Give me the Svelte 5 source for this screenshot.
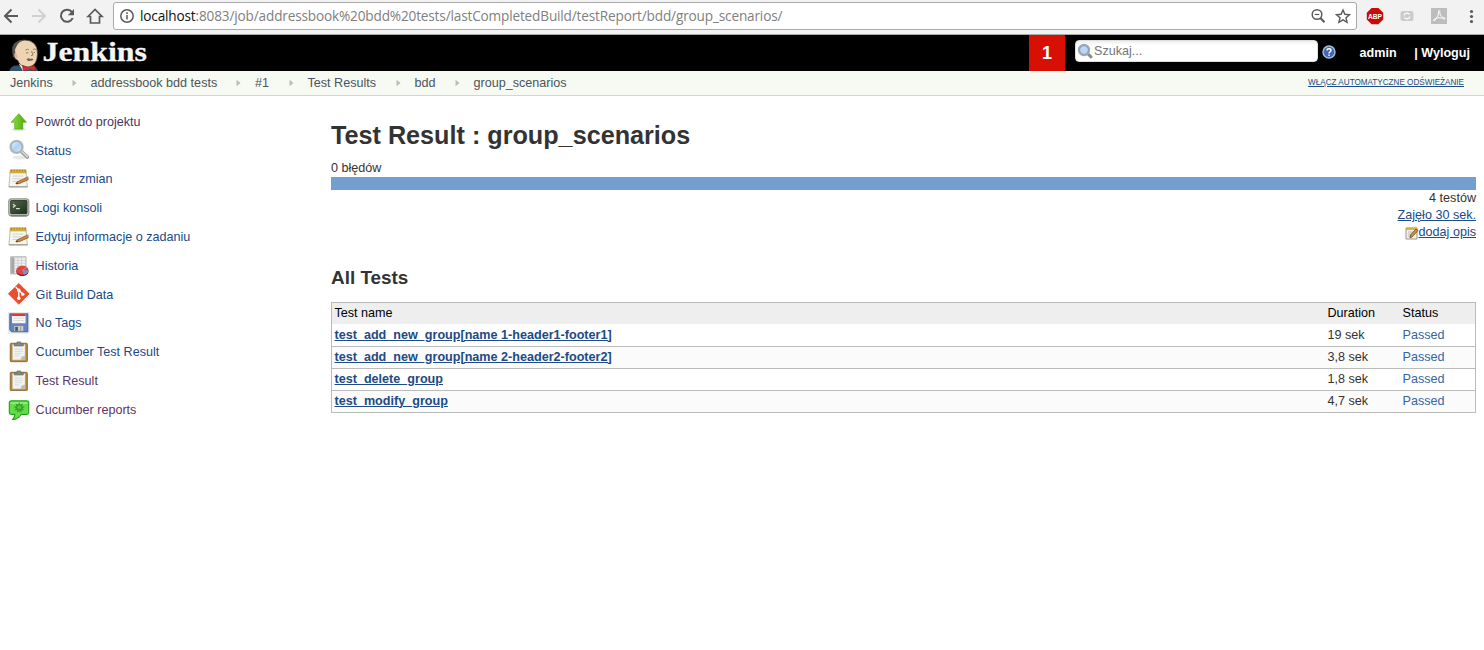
<script>
  const crumbs = [
    ['Jenkins', 42.5], ['addressbook bdd tests', 126.5], ['#1', 14.5],
    ['Test Results', 69], ['bdd', 21], ['group_scenarios', 93]
  ];
  const tasks = [
    ['up', 'Powrót do projektu', true],
    ['search', 'Status'],
    ['notepad', 'Rejestr zmian'],
    ['terminal', 'Logi konsoli'],
    ['notepad', 'Edytuj informacje o zadaniu'],
    ['chart', 'Historia'],
    ['git', 'Git Build Data'],
    ['save', 'No Tags'],
    ['clip', 'Cucumber Test Result'],
    ['clip', 'Test Result', true],
    ['cucumber', 'Cucumber reports', true]
  ];
  const tests = [
    ['test_add_new_group[name 1-header1-footer1]', '19 sek'],
    ['test_add_new_group[name 2-header2-footer2]', '3,8 sek'],
    ['test_delete_group', '1,8 sek'],
    ['test_modify_group', '4,7 sek']
  ];
</script>

{#snippet icon(name)}
  <svg class="icon" viewBox="0 0 24 24">
    {#if name === 'up'}
      <ellipse cx="12" cy="20.5" rx="8" ry="1.5" fill="#ddd" />
      <path d="M12 3 3.500 12.500H7.500V20h9v-7.500h4z" fill="url(#green)" stroke="#58a716" stroke-width=".8" />
    {:else if name === 'search'}
      <ellipse cx="14" cy="20.500" rx="9" ry="2.200" fill="#e8e8e6" />
      <path d="m15 14 6.500 6" stroke="#999b98" stroke-width="4" stroke-linecap="round" />
      <path d="m15.500 14 6 5.500" stroke="#d4d6d2" stroke-width="2" stroke-linecap="round" />
      <circle cx="9.500" cy="8.800" r="7" fill="url(#glass)" stroke="#b9bdbb" stroke-width="2" />
      <circle cx="9.500" cy="8.800" r="6" fill="none" stroke="#789fc9" stroke-width=".7" />
    {:else if name === 'notepad'}
      <path d="M2.500 3.500h17.500L21.500 21H1z" fill="#f6f6f2" stroke="#b7b7ae" />
      <path d="M1 20.800h20.700" stroke="#aaa99f" stroke-width="1.600" />
      <path d="M2.500 2h17.500v3.500h-17.500z" fill="#dcb63b" stroke="#a98b2b" stroke-width=".6" />
      <path d="M4 2v2m3-2v2m3-2v2m3-2v2m3-2v2m3-2v2" stroke="#8c7427" stroke-width=".8" />
      <path d="M5 9h12M5 12h10M5 15h7" stroke="#cfcfc9" />
      <path d="m10 15.500 10.500-5 2 2.500-9.500 4.200-4 .5z" fill="#d18a35" stroke="#76502b" stroke-width=".8" />
      <path d="m20 10.300 2-1 1.500 2.300-2 1z" fill="#d87963" />
      <path d="m8 17.700 2.500-1.500.7 1.300z" fill="#333" />
    {:else if name === 'terminal'}
      <rect x=".8" y="2" width="22.400" height="19" rx="2.500" fill="#c4c5bf" stroke="#80837d" />
      <rect x="3" y="4" width="18" height="14.500" rx=".6" fill="url(#screen)" stroke="#263224" />
      <path d="m5.500 8 2.500 1.800-2.500 1.800M9 13h4" fill="none" stroke="#d9e4d3" stroke-width="1.300" />
      <path d="M3 21h18" stroke="#686b65" stroke-width="1.200" />
    {:else if name === 'chart'}
      <path d="M3 2h17v19H3z" fill="#f4f4f3" stroke="#a7a7a5" />
      <path d="M3.500 2.500h3.700v18h-3.700z" fill="#a5a7a5" />
      <path d="M3.500 3h16M7 6h13M7 9h13M7 12h13M7 15h7M7 18h5M11 3v18M15 3v11" stroke="#c5c5c3" stroke-width=".8" />
      <ellipse cx="16" cy="18.500" rx="6.800" ry="5" fill="#921818" />
      <ellipse cx="16" cy="17" rx="6.800" ry="5" fill="#dc4545" />
      <path d="m16 17 1.500 4.900q4.500-.5 5.300-4.900z" fill="#6e9acb" />
      <path d="m16 17 5-3.300" stroke="#ef8585" />
    {:else if name === 'git'}
      <path d="M12 .6 23.500 12 12 23.500.5 12z" fill="#e94e31" stroke="#e94e31" stroke-width="1" stroke-linejoin="round" />
      <path d="m8.500 4.500 8 8M12 8v9" stroke="#fff" stroke-width="1.500" />
      <g fill="#fff"><circle cx="12" cy="8" r="1.900" /><circle cx="16.400" cy="12.400" r="1.900" /><circle cx="12" cy="17" r="1.900" /></g>
    {:else if name === 'save'}
      <path d="M0 0h24v24H0z" fill="#e9e9eb" />
      <path d="M2 2h20v20H4l-2-2z" fill="#6485bd" stroke="#3e5c91" />
      <path d="M4.500 2h15v10.500h-15z" fill="#f7f7f7" />
      <path d="M4.500 2h15v2.500h-15z" fill="#d63b35" />
      <path d="M6 7h12M6 9.500h12" stroke="#d0d0d0" stroke-width=".8" />
      <path d="M6.500 15h11v6.500h-11z" fill="#c9ccce" stroke="#687584" stroke-width=".7" />
      <path d="M8 16.500h3v4.500H8z" fill="#435679" />
      <path d="M14 15v6.500" stroke="#969b9e" />
    {:else if name === 'clip'}
      <rect x="2.500" y="2.500" width="19" height="20.500" rx="1" fill="#b4863d" stroke="#8b652c" />
      <path d="M5 4h14v17H5z" fill="#f2f2ef" stroke="#c9c7bd" stroke-width=".6" />
      <path d="M7.500 9h9M7.500 11.500h9M7.500 14h8M7.500 16.500h5" stroke="#d3d3d0" stroke-width=".8" />
      <path d="M19 16v5h-5l1-3.500z" fill="#bdbeb9" />
      <path d="M7 5.500V3h3V1h4v2h3v2.500z" fill="#858a83" stroke="#646861" stroke-width=".7" />
    {:else}
      <path d="M4 2h17q2 0 2 2v11q0 2-2 2h-6q-3 5-10.500 6.500Q8 20.500 7.500 17H4q-2.500 0-2.500-2V4Q1.500 2 4 2z" fill="#64dc47" stroke="#23a51f" stroke-width="1.300" />
      <path d="M3 3.500h18.500v2H3z" fill="#93ee78" />
      <path d="m12.500 3.500 1.300 2.600 2.700-1-.7 2.800 3 .8-2.500 1.600 1.800 2.300-3-.2-.2 2.800-2.300-1.700-2.200 1.700-.4-2.800-3 .2 1.700-2.300-2.400-1.500 2.900-.9-.8-2.800 2.800 1z" fill="#38a52d" />
      <circle cx="12.500" cy="9.200" r="2" fill="#54c93c" />
    {/if}
  </svg>
{/snippet}

<svg class="defs" aria-hidden="true">
  <defs>
    <linearGradient id="green"><stop stop-color="#8ee43c" /><stop offset="1" stop-color="#4aa510" /></linearGradient>
    <linearGradient id="glass" x2="1" y2="1"><stop stop-color="#f1f8ff" /><stop offset=".5" stop-color="#b1d1f2" /><stop offset="1" stop-color="#dcecff" /></linearGradient>
    <linearGradient id="screen" x2="1" y2="1"><stop stop-color="#53674b" /><stop offset="1" stop-color="#1d301d" /></linearGradient>
  </defs>
</svg>

<div class="browser">
  <svg class="nav" viewBox="0 0 113 34" fill="none" stroke="#5a5a5a" stroke-width="2">
    <path d="M18 16H5m6.500-6.500L5 16l6.500 6.500" />
    <path d="M32 16h13m-6.500-6.500L45 16l-6.500 6.500" stroke="#d0d0d0" />
    <path d="M72 12.200A6.100 6.100 0 1 0 72.700 18" />
    <path d="M74 9v6.200h-6.200z" fill="#5a5a5a" stroke="none" />
    <path d="M88 16.500 95 9.500l7 7h-2.500V23h-9v-6.500z" stroke-width="1.700" />
  </svg>
  <div class="omnibox">
    <svg class="info" viewBox="0 0 16 16" fill="none" stroke="#5a5a5a" stroke-width="1.500"><circle cx="8" cy="8" r="6.200" /><path d="M8 7v4.500M8 4.200v1.700" /></svg>
    <span class="url"><b>localhost</b>:8083/job/addressbook%20bdd%20tests/lastCompletedBuild/testReport/bdd/group_scenarios/</span>
    <svg class="omni-actions" viewBox="0 0 44 18" fill="none" stroke="#5a5a5a" stroke-width="1.500">
      <circle cx="7" cy="7.500" r="4.800" /><path d="M4.700 7.500h4.600" stroke-width="1.200" /><path d="m10.300 11 4.200 4.200" stroke-width="2" />
      <path d="m33 3 1.900 4.300 4.600.4-3.500 3.100 1.100 4.600-4.100-2.500-4.100 2.500 1.100-4.600-3.500-3.100 4.600-.4z" stroke-width="1.400" />
    </svg>
  </div>
  <svg class="extensions" viewBox="0 0 127 34">
    <path d="M14.600 8h6.800l4.800 4.800v6.600l-4.800 4.800h-6.800l-4.800-4.800v-6.600z" fill="#c70b0b" />
    <text x="18" y="18.900" text-anchor="middle" font-size="7.600" font-weight="700" fill="#fff" textLength="14" lengthAdjust="spacingAndGlyphs">ABP</text>
    <rect x="43.500" y="11" width="13" height="10" rx="2" fill="#ccc" />
    <path d="M47.200 15.500a2.900 2.900 0 0 1 5.300-1m.3 2a2.900 2.900 0 0 1-5.300 1" stroke="#fff" stroke-width="1.300" fill="none" />
    <path d="M74 8h16v16H74z" fill="#bdbdbd" />
    <path d="M77 21c3-2 5-6.500 4.600-9.500-.2-1.500 1.500-1.600 1.300.1-.5 3.400 1.800 5.800 4.500 6.300 1.500.3.800 1.500-.5.900-3-1.400-5.500-1.400-8.500-.2-2.200 1-2.500 2-1.400 2.400z" stroke="#fff" stroke-width="1" fill="none" />
    <g fill="#5a5a5a"><circle cx="114.500" cy="11.500" r="1.600" /><circle cx="114.500" cy="16.500" r="1.600" /><circle cx="114.500" cy="21.500" r="1.600" /></g>
  </svg>
</div>

<header>
  <svg class="logo" viewBox="0 0 160 36">
    <path d="M9.500 36q1-5 6-5.500l15-.5q6 1 7.500 6z" fill="#35536b" />
    <path d="m19 29 4 7 7-2 3-5z" fill="#f7f2e8" />
    <path d="M13.500 19Q12 5.500 24 5q13.500 0 13.500 13.500 0 12.500-9.500 13.500-8 0-10.500-7-3 0-4-6z" fill="#edd4b3" stroke="#493a32" stroke-width=".7" />
    <path d="M13 22Q10 9 17 6.500q5-2.500 8-1.500-6.500 1.500-8 5.500l-2 4 .5 6q-1.500 2.500-2.500 1.500z" fill="#55504c" />
    <path d="M15.800 17.500q-2.500 1-1 4.500 1.500 1.500 3 0" fill="#e2b491" />
    <path d="M25.500 15q2-1.500 3.500 0m4-.5q1.500-1 3 0M26 17.800h2.500m5-.3h1.500M31.500 16l1.500 4-2 .7" fill="none" stroke="#7d6754" stroke-width=".8" />
    <path d="M26.500 24.500q2-2 4-.5 1.500-1 3 .5-1.500 1.500-3.500 1.300-1.500 1-3.500-1.300z" fill="#75604f" />
    <path d="m22.500 30.500 6 2 6-2 1 5.500-6-2-6 2z" fill="#dd2c2c" stroke="#872222" stroke-width=".7" />
    <text x="42.500" y="25.500" font-size="27" textLength="104.500" lengthAdjust="spacingAndGlyphs">Jenkins</text>
  </svg>
  <div class="alert">1</div>
  <div class="searchbox">
    <svg viewBox="0 0 16 16"><path d="m10.500 10.500 3.500 3.300" stroke="#8a8a89" stroke-width="3" stroke-linecap="round" /><circle cx="7" cy="7" r="5.200" fill="#bdd6f3" stroke="#a5abb3" stroke-width="2" /><circle cx="7" cy="7" r="4.300" fill="none" stroke="#6d91c3" stroke-width=".7" /></svg>
    <span>Szukaj...</span>
  </div>
  <svg class="help" viewBox="0 0 14 14"><circle cx="7" cy="7" r="6" fill="#4167ad" stroke="#a9bfdf" stroke-width="1.400" /><path d="M4.900 5.400C5 3.200 9 3.200 9 5.400 9 6.800 7 6.700 7 8.400M7 9.500v1.400" stroke="#fff" stroke-width="1.400" fill="none" /></svg>
  <span class="user">admin</span>
  <span class="logout">| Wyloguj</span>
</header>

<nav class="breadcrumbs">
  {#each crumbs as [label, width], i}
    {#if i}<svg class="arrow" viewBox="0 0 5 8"><path d="M.5.800 4.500 4 .5 7.200z" fill="#bbb" /></svg>{/if}
    <span style:width="{width}px">{label}</span>
  {/each}
  <a class="refresh" href="#refresh">WŁĄCZ AUTOMATYCZNE ODŚWIEŻANIE</a>
</nav>

<div class="content">
  <aside>
    {#each tasks as [kind, label, visited]}
      <div class="task" class:visited>{@render icon(kind)}<span>{label}</span></div>
    {/each}
  </aside>
  <main>
    <h1>Test Result : group_scenarios</h1>
    <div class="failures">0 błędów</div>
    <div class="bar"></div>
    <div class="summary">
      <div>4 testów</div>
      <div><a href="#duration">Zajęło 30 sek.</a></div>
      <div class="describe">
        <svg viewBox="0 0 14 14"><path d="M1 2h11v11H1z" fill="#efefe7" stroke="#96968b" /><path d="M1 1.500h11v2.500H1z" fill="#d9b43d" /><path d="M3 6h6M3 8h4M3 10h3" stroke="#bbb" /><path d="m5.500 9 5.500-6 2 1.500L7 11l-2 .8z" fill="#d59337" stroke="#624822" stroke-width=".8" /></svg><a href="#description">dodaj opis</a>
      </div>
    </div>
    <h2>All Tests</h2>
    <div class="table">
      <div class="row head"><span>Test name</span><span>Duration</span><span>Status</span></div>
      {#each tests as [name, duration]}
        <div class="row"><a href="#test">{name}</a><span>{duration}</span><span class="passed">Passed</span></div>
      {/each}
    </div>
  </main>
</div>

<style>
  :global(body) { margin: 0; background: #fff; font: 12.6px/17px "Liberation Sans", Arial, sans-serif; color: #333; overflow: hidden; }
  :global(*) { box-sizing: border-box; }
  svg { display: block; flex: none; }
  a { color: #204a87; text-decoration: underline; }
  .defs { position: absolute; width: 0; height: 0; }
  .browser { display: flex; height: 35px; background: #f2f2f2; border-bottom: 1px solid #a9aaa9; }
  .nav { width: 113px; height: 34px; }
  .omnibox { display: flex; align-items: center; width: 1244px; height: 28px; margin-top: 2px; padding-left: 5px; border: 1px solid #a9a9a9; border-radius: 3px; background: #fff; }
  .info { width: 16px; height: 16px; }
  .url { margin-left: 5px; color: #808080; font: 13.600px/20px "Open Sans", sans-serif; letter-spacing: -.155px; white-space: nowrap; }
  .url b { font-weight: 400; color: #111; }
  .omni-actions { width: 44px; height: 18px; margin-left: auto; margin-right: 2px; }
  .extensions { width: 127px; height: 34px; }
  header { display: flex; height: 36px; background: #000; color: #fff; font-weight: 700; }
  .logo { width: 160px; height: 36px; }
  .logo text { fill: #f5f5f5; font-family: "Liberation Serif", serif; stroke: #f5f5f5; stroke-width: .3px; }
  .alert { width: 36px; height: 36px; margin-left: 869px; background: #d80f05; font-size: 18px; line-height: 36px; text-align: center; }
  .searchbox { display: flex; align-items: center; width: 243px; height: 22px; margin: 5px 0 0 10px; padding-left: 1px; border: 1px solid #ddd; border-radius: 4px; background: linear-gradient(#eee, #fff 4px); color: #757575; font-weight: 400; }
  .searchbox svg { width: 16px; height: 16px; }
  .searchbox span { margin-left: 1px; }
  .help { width: 14px; height: 14px; margin: 10px 0 0 4px; }
  .user { margin: 10px 0 0 23.500px; }
  .logout { margin: 10px 14px 0 auto; }
  .breadcrumbs { display: flex; height: 25px; padding: 0 20px 0 10px; align-items: center; border-bottom: 1px solid #d3d7cf; background: #f6faf2; color: #4d545d; white-space: nowrap; }
  .arrow { width: 5px; height: 8px; margin: 0 14px 0 19px; }
  .refresh { margin-left: auto; font-size: 8.130px; line-height: 12px; }
  .content { display: flex; }
  aside { width: 331px; padding: 11px 0 0 8px; }
  .task { display: flex; align-items: center; height: 28.800px; color: #204a87; }
  .task span { margin: 1.900px 0 0 6px; }
  .task.visited { color: #5c3566; }
  .task.visited:first-child { color: #4a3566; }
  .icon { width: 21.600px; height: 21.600px; }
  main { width: 1145px; }
  h1 { margin: 24px 0 0; font-size: 25.200px; line-height: 30px; }
  .failures { margin-top: 9px; line-height: 18px; }
  .bar { height: 13px; background: #729fcf; }
  .summary { text-align: right; }
  .describe { display: flex; justify-content: flex-end; }
  .describe svg { width: 14px; height: 14px; margin-top: 2px; }
  h2 { margin: 26px 0 0; font-size: 18.900px; line-height: 22px; }
  .table { margin-top: 13px; border: 1px solid #bbb; }
  .row { display: grid; grid-template-columns: 993px 75px 1fr; align-items: center; height: 22px; padding-left: 2.500px; border-top: 1px solid #bbb; }
  .row > * { margin-top: -1px; }
  .row:nth-child(odd) { background: #fbfbfb; }
  .row:nth-child(2) { border-top-color: #fff; }
  .row.head { height: 21px; border: 0; background: #eee; color: #000; }
  .row a { font-weight: 700; }
  .passed { color: #3465a4; }
</style>
